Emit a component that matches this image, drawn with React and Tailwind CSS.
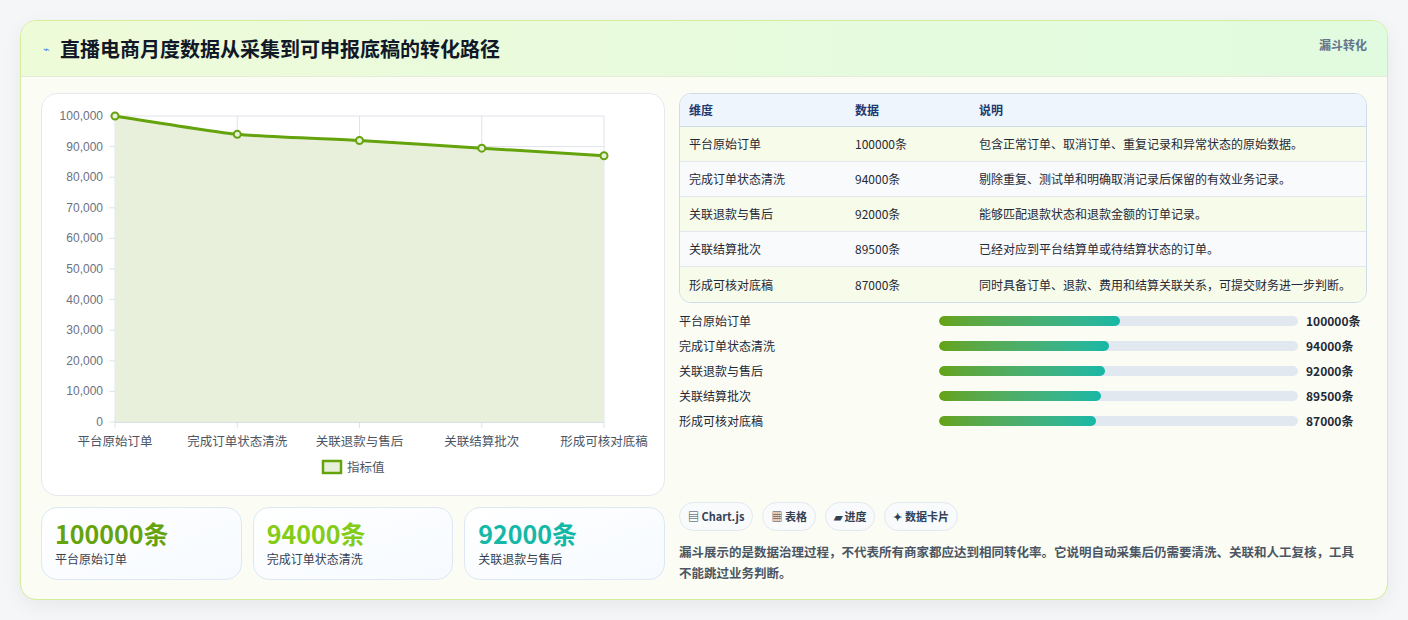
import React from "react";

const rows = [
  ["平台原始订单", 100000, "包含正常订单、取消订单、重复记录和异常状态的原始数据。"],
  ["完成订单状态清洗", 94000, "剔除重复、测试单和明确取消记录后保留的有效业务记录。"],
  ["关联退款与售后", 92000, "能够匹配退款状态和退款金额的订单记录。"],
  ["关联结算批次", 89500, "已经对应到平台结算单或待结算状态的订单。"],
  ["形成可核对底稿", 87000, "同时具备订单、退款、费用和结算关联关系，可提交财务进一步判断。"],
];

function Chart() {
  const L = 73, R = 562, T = 22, B = 328;
  const xs = rows.map((_, i) => L + (i * (R - L)) / 4);
  const ys = rows.map((r) => B - (r[1] / 100000) * (B - T));
  const pts = xs.map((x, i) => [x, ys[i]]);
  let d = `M${pts[0][0]},${pts[0][1]}`;
  for (let i = 1; i < pts.length; i++) {
    const p0 = pts[Math.max(i - 2, 0)], p1 = pts[i - 1], p2 = pts[i], p3 = pts[Math.min(i + 1, pts.length - 1)];
    const t = 0.1;
    const c1 = [p1[0] + (p2[0] - p0[0]) * t, p1[1] + (p2[1] - p0[1]) * t];
    const c2 = [p2[0] - (p3[0] - p1[0]) * t, p2[1] - (p3[1] - p1[1]) * t];
    d += ` C${c1[0]},${c1[1]} ${c2[0]},${c2[1]} ${p2[0]},${p2[1]}`;
  }
  const area = d + ` L${R},${B} L${L},${B} Z`;
  return (
    <svg width="624" height="401" style={{ fontFamily: "'Liberation Sans','Noto Sans CJK SC',sans-serif" }}>
      {Array.from({ length: 11 }).map((_, i) => {
        const y = B - (i * (B - T)) / 10;
        return (
          <g key={i}>
            <line x1={L - 6} x2={R} y1={y} y2={y} stroke="#dfe3ea" />
            <text x={L - 12} y={y + 4} textAnchor="end" fontSize="12" fill="#6b7280">
              {(i * 10000).toLocaleString("en-US")}
            </text>
          </g>
        );
      })}
      {xs.map((x, i) => (
        <line key={i} x1={x} x2={x} y1={T} y2={B + 6} stroke="#dfe3ea" />
      ))}
      <line x1={L} x2={R} y1={B} y2={B} stroke="#c8ccd4" />
      <path d={area} fill="#e8f0dc" />
      <path d={d} fill="none" stroke="#65a30d" strokeWidth="3" />
      {pts.map(([x, y], i) => (
        <circle key={i} cx={x} cy={y} r="3.5" fill="#e8f0dc" stroke="#65a30d" strokeWidth="2" />
      ))}
      {xs.map((x, i) => (
        <text key={i} x={x} y={352} textAnchor="middle" fontSize="12.5" fill="#4b5563" style={{ fontFamily: "'Noto Sans CJK SC',sans-serif" }}>
          {rows[i][0]}
        </text>
      ))}
      <rect x="281" y="367" width="18" height="12" fill="#e8f0dc" stroke="#65a30d" strokeWidth="2.5" />
      <text x="305" y="378" fontSize="12.5" fill="#4b5563" style={{ fontFamily: "'Noto Sans CJK SC',sans-serif" }}>指标值</text>
    </svg>
  );
}

export default function App() {
  const f = { fontFamily: "'Noto Sans CJK SC','Liberation Sans',sans-serif" };
  const stats = [
    ["100000条", "平台原始订单", "text-[#65a30d]"],
    ["94000条", "完成订单状态清洗", "text-[#84cc16]"],
    ["92000条", "关联退款与售后", "text-[#14b8a6]"],
  ];
  return (
    <div className="w-[1408px] h-[620px] bg-[#f5f6f7] p-5" style={f}>
      <div className="h-[580px] rounded-2xl border border-[#d4ee9c] bg-[#fbfdf5] overflow-hidden shadow-[0_6px_20px_rgba(0,0,0,0.06)] flex flex-col">
        <div className="h-[56px] shrink-0 flex items-start justify-between pl-[22px] pr-5 bg-gradient-to-r from-[#eefbd9] to-[#e1fbe0] border-b border-[#e3ecd9]">
          <div className="flex items-center gap-[10px] h-full">
            <span className="text-[#3b82f6] text-[11px]">⌁</span>
            <span className="text-[20px] font-bold text-[#111827]">直播电商月度数据从采集到可申报底稿的转化路径</span>
          </div>
          <span className="mt-[15px] text-[12px] font-bold text-[#64748b]">漏斗转化</span>
        </div>
        <div className="flex-1 flex gap-[14px] px-5 pt-4">
          <div className="w-[624px] flex flex-col gap-[11px]">
            <div className="h-[403px] rounded-2xl border border-[#e5e9ef] bg-white">
              <Chart />
            </div>
            <div className="grid grid-cols-3 gap-[11px]">
              {stats.map(([v, l, c]) => (
                <div key={l} className="h-[73px] rounded-2xl border border-[#dde8f4] bg-gradient-to-br from-white to-[#f6faff] px-[13px] pt-[9px]">
                  <div className={`text-[25px] leading-[32px] font-bold ${c}`}>{v}</div>
                  <div className="text-[12px] text-[#374151] mt-[1px]">{l}</div>
                </div>
              ))}
            </div>
          </div>
          <div className="flex-1 flex flex-col">
            <div className="rounded-xl border border-[#cfdbe8] overflow-hidden text-[12px] text-[#1f2937]">
              <div className="h-[33px] flex items-center bg-[#eef5fc] border-b border-[#cfdbe8] font-bold text-[#1e3a6e]">
                <div className="w-[166px] pl-[9px]">维度</div>
                <div className="w-[124px] pl-[9px]">数据</div>
                <div className="pl-[9px]">说明</div>
              </div>
              {rows.map(([a, b, c], i) => (
                <div key={a} className={`h-[35px] flex items-center ${i < 4 ? "border-b border-[#e3e8ee]" : ""} ${i % 2 ? "bg-[#f8fafc]" : "bg-[#f7fbea]"}`}>
                  <div className="w-[166px] pl-[9px]">{a}</div>
                  <div className="w-[124px] pl-[9px]">{b}条</div>
                  <div className="pl-[9px]">{c}</div>
                </div>
              ))}
            </div>
            <div className="mt-[10px] flex flex-col gap-[9px]">
              {rows.map(([a, b]) => (
                <div key={a} className="h-[16px] flex items-center text-[12px] text-[#1f2937]">
                  <div className="w-[260px]">{a}</div>
                  <div className="w-[359px] h-[10px] rounded-full bg-[#e2e8f0] overflow-hidden">
                    <div className="h-full rounded-full bg-gradient-to-r from-[#65a30d] to-[#14b8a6]" style={{ width: `${(b / 100000) * 50.4}%` }} />
                  </div>
                  <div className="ml-2 font-bold">{b}条</div>
                </div>
              ))}
            </div>
            <div className="mt-[73px] flex gap-[9px]">
              {["▤ Chart.js", "▦ 表格", "▰ 进度", "✦ 数据卡片"].map((t) => (
                <div key={t} className="h-[29px] px-[8px] flex items-center rounded-full border border-[#e3e8ee] bg-[#f8fafc] text-[11px] font-bold text-[#334155]">{t}</div>
              ))}
            </div>
            <div className="mt-[10px] pr-[8px] text-[12.5px] leading-[21px] font-semibold text-[#4b5563]">
              漏斗展示的是数据治理过程，不代表所有商家都应达到相同转化率。它说明自动采集后仍需要清洗、关联和人工复核，工具不能跳过业务判断。
            </div>
          </div>
        </div>
      </div>
    </div>
  );
}
